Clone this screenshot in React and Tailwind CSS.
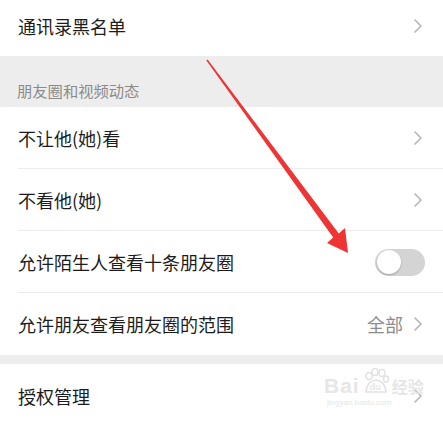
import React from "react";

const font = { fontFamily: '"Noto Sans CJK SC", "Noto Sans", sans-serif' };

const Chevron = () => (
  <svg width="10" height="16" viewBox="0 0 10 16" className="shrink-0">
    <path d="M2 2 L8 8 L2 14" fill="none" stroke="#b5b5b5" strokeWidth="1.6" strokeLinecap="round" strokeLinejoin="round" />
  </svg>
);

const Row = ({ label, right, divider = true, height = "h-[62px]" }) => (
  <div className={`relative bg-white ${height} flex items-center pl-[18px] pr-[20px]`}>
    <span className="flex-1 text-[18px] text-[#1c1c1c]">{label}</span>
    {right}
    {divider && <div className="absolute left-[18px] right-0 bottom-0 h-px bg-[#ececec]" />}
  </div>
);

const Toggle = () => (
  <div className="w-[50px] h-[27px] rounded-full bg-[#d4d4d4] p-[1.5px] -mr-[2px] flex items-center">
    <div className="w-[24px] h-[24px] rounded-full bg-white shadow-[0_1px_2px_rgba(0,0,0,0.25)]" />
  </div>
);

export default function App() {
  return (
    <div className="relative w-[443px] h-[424px] overflow-hidden bg-[#ededed]" style={font}>
      <div className="bg-white h-[56px] flex items-center pl-[18px] pr-[20px] pb-[4px]">
        <span className="flex-1 text-[18px] text-[#1c1c1c]">通讯录黑名单</span>
        <Chevron />
      </div>

      <div className="h-[51px] pl-[17px] pt-[23px] text-[15.3px] leading-[22px] text-[#8a8a8a]">
        朋友圈和视频动态
      </div>

      <Row label="不让他(她)看" right={<Chevron />} />
      <Row label="不看他(她)" right={<Chevron />} />
      <Row label="允许陌生人查看十条朋友圈" right={<Toggle />} />
      <Row
        label="允许朋友查看朋友圈的范围"
        divider={false}
        right={
          <div className="flex items-center gap-[10px]">
            <span className="text-[18px] text-[#8c8c8c]">全部</span>
            <Chevron />
          </div>
        }
      />

      <div className="h-[9px]" />

      <Row label="授权管理" right={<Chevron />} divider={false} height="h-[64px]" />

      {/* red annotation arrow */}
      <svg className="absolute inset-0 pointer-events-none" width="443" height="424">
        <polygon
          points="207.6,59.5 338.8,233.4 345,228 348,253 327,243 333.2,237.6 206.4,60.5"
          fill="#ef3434"
        />
      </svg>

      {/* watermark */}
      <div className="absolute left-[324px] top-[368px] pointer-events-none select-none text-[#e6e6e6]">
        <div className="flex items-end" style={{ fontFamily: '"Liberation Sans", sans-serif' }}>
          <span className="text-[21px] font-bold leading-none tracking-[1px]">Bai</span>
          <span className="relative mx-[2px] w-[28px] h-[28px]">
            <svg width="28" height="28" viewBox="0 0 28 28" className="absolute inset-0">
              <ellipse cx="7" cy="8" rx="3" ry="3.5" fill="none" stroke="#e2e2e2" strokeWidth="1.5" />
              <ellipse cx="13" cy="4" rx="3" ry="3.5" fill="none" stroke="#e2e2e2" strokeWidth="1.5" />
              <ellipse cx="20" cy="5" rx="3" ry="3.5" fill="none" stroke="#e2e2e2" strokeWidth="1.5" />
              <ellipse cx="24" cy="11" rx="2.5" ry="3" fill="none" stroke="#e2e2e2" strokeWidth="1.5" />
              <path d="M4 24 Q5 13 14 12 Q23 13 24 24 Z" fill="none" stroke="#e2e2e2" strokeWidth="1.5" />
            </svg>
            <span className="absolute left-[8px] top-[15px] text-[9px] font-bold leading-none">du</span>
          </span>
          <span className="text-[16px] font-bold leading-none mb-[2px]" style={font}>经验</span>
        </div>
        <div className="text-[8px] leading-none mt-[3px] ml-[3px]" style={{ fontFamily: '"Liberation Sans", sans-serif' }}>
          jingyan.baidu.com
        </div>
      </div>
    </div>
  );
}
